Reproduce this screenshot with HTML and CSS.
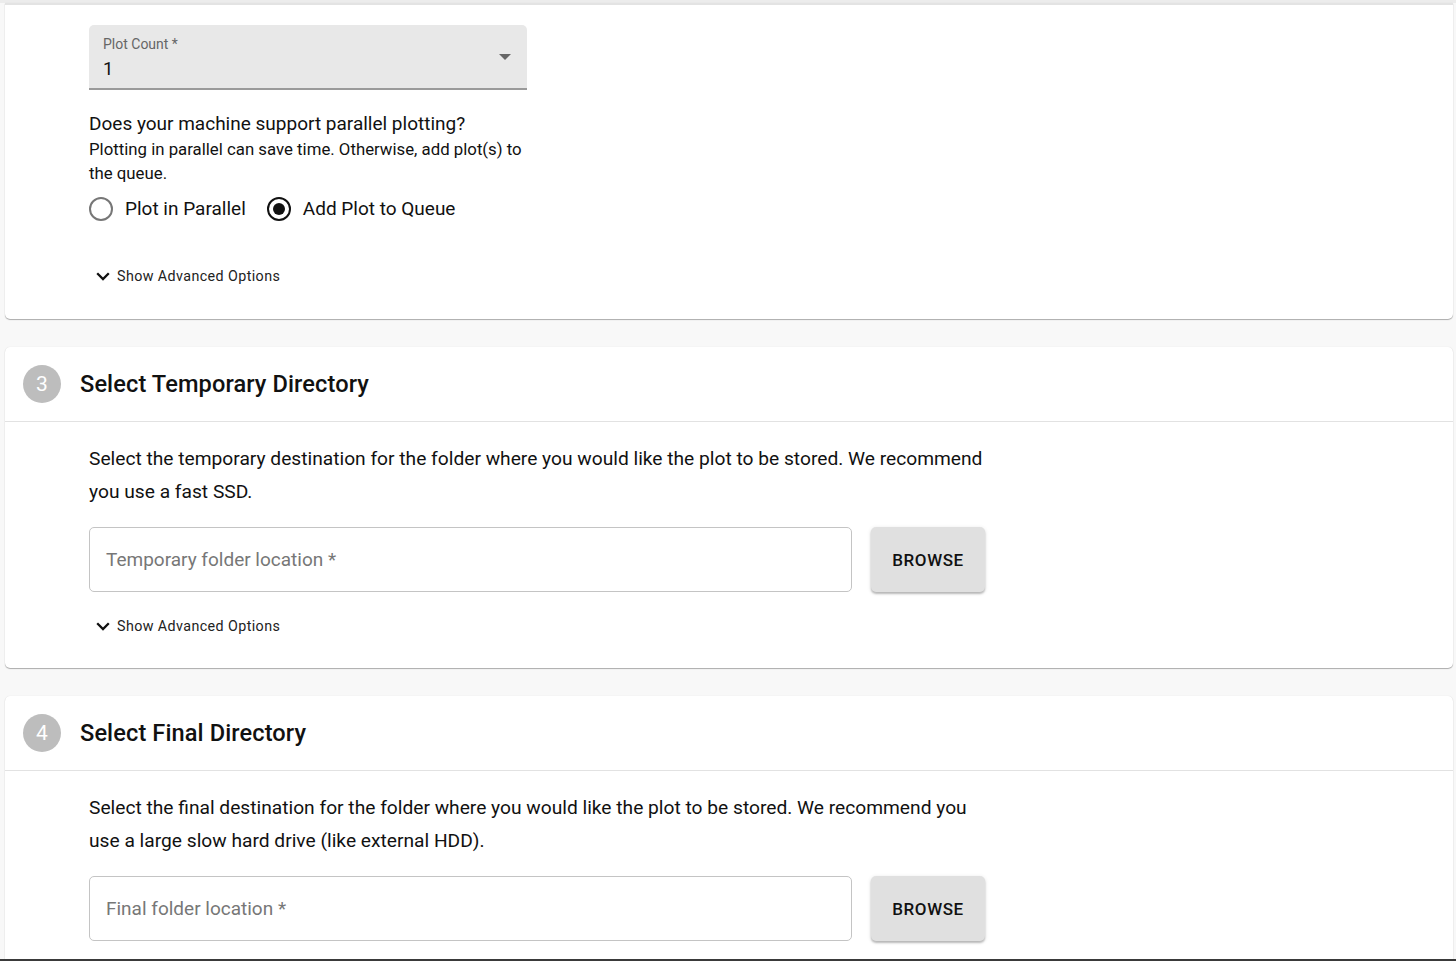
FILE: index.html
```html
<!DOCTYPE html>
<html>
<head>
<meta charset="utf-8">
<link rel="stylesheet" href="styles.css">
</head>
<body>
<div class="page">
  <section class="card card-first">
    <div class="content">
      <div class="select">
        <div class="select-label">Plot Count *</div>
        <div class="select-value">1</div>
        <span class="select-arrow"></span>
      </div>
      <div class="question">Does your machine support parallel plotting?</div>
      <div class="hint">Plotting in parallel can save time. Otherwise, add plot(s) to<br>the queue.</div>
      <div class="radios">
        <label class="radio"><span class="radio-circle"></span>Plot in Parallel</label>
        <label class="radio"><span class="radio-circle checked"></span>Add Plot to Queue</label>
      </div>
      <div class="advanced advanced-first">
        <svg class="chev" viewBox="0 0 16 16" width="16" height="16"><path d="M2.2 5.2 8 11l5.8-5.8" fill="none" stroke="#111" stroke-width="2.3"/></svg>
        <span>Show Advanced Options</span>
      </div>
    </div>
  </section>

  <section class="card">
    <div class="step-header">
      <span class="step-num">3</span>
      <h2 class="step-title">Select Temporary Directory</h2>
    </div>
    <div class="content content-step">
      <p class="desc">Select the temporary destination for the folder where you would like the plot to be stored. We recommend<br>you use a fast SSD.</p>
      <div class="field-row">
        <div class="field">Temporary folder location *</div>
        <button class="browse">BROWSE</button>
      </div>
      <div class="advanced">
        <svg class="chev" viewBox="0 0 16 16" width="16" height="16"><path d="M2.2 5.2 8 11l5.8-5.8" fill="none" stroke="#111" stroke-width="2.3"/></svg>
        <span>Show Advanced Options</span>
      </div>
    </div>
  </section>

  <section class="card card-last">
    <div class="step-header">
      <span class="step-num">4</span>
      <h2 class="step-title">Select Final Directory</h2>
    </div>
    <div class="content content-step">
      <p class="desc">Select the final destination for the folder where you would like the plot to be stored. We recommend you<br>use a large slow hard drive (like external HDD).</p>
      <div class="field-row">
        <div class="field">Final folder location *</div>
        <button class="browse">BROWSE</button>
      </div>
    </div>
  </section>
</div>
</body>
</html>
```

FILE: styles.css
```css
* { box-sizing: border-box; }
html, body {
  margin: 0;
  padding: 0;
  height: 961px;
  overflow: hidden;
  background: #f8f8f8;
  font-family: Roboto, "Liberation Sans", sans-serif;
  color: #111;
}
body::after {
  content: "";
  position: fixed;
  left: 0;
  right: 0;
  bottom: 0;
  height: 2px;
  background: #3a3a3a;
}
.page {
  padding: 0 3px 0 5px;
  border-top: 3px solid #ececec;
  display: flex;
  flex-direction: column;
  gap: 28px;
}
.card {
  background: #fff;
  border-radius: 5px;
  box-shadow: 0 1px 1px rgba(0,0,0,0.3), 0 0 1px rgba(0,0,0,0.12);
}
.card-first {
  border-top-left-radius: 0;
  border-top-right-radius: 0;
  border-top: 2px solid #e3e3e3;
  height: 316px;
}
.card-last { height: 300px; }
.content {
  padding: 20px 0 32px 84px;
}
.content-step { padding-top: 20px; }
.select {
  position: relative;
  width: 438px;
  height: 65px;
  background: #e8e8e8;
  border-radius: 5px 5px 0 0;
  border-bottom: 2px solid #9a9a9a;
  padding: 11px 14px 0;
}
.select-label {
  font-size: 14px;
  color: #666;
  line-height: 16px;
}
.select-value {
  font-size: 18.5px;
  line-height: 24px;
  margin-top: 5px;
  color: #111;
}
.select-arrow {
  position: absolute;
  right: 16px;
  top: 29px;
  width: 0;
  height: 0;
  border-left: 6px solid transparent;
  border-right: 6px solid transparent;
  border-top: 6px solid #666;
}
.question {
  margin-top: 21px;
  font-size: 19px;
  line-height: 26px;
}
.hint {
  font-size: 16.8px;
  line-height: 24px;
  margin-top: 0;
}
.radios {
  display: flex;
  gap: 21px;
  margin-top: 12px;
}
.radio {
  display: flex;
  align-items: center;
  gap: 12px;
  font-size: 19px;
  line-height: 24px;
}
.radio-circle {
  width: 24px;
  height: 24px;
  border-radius: 50%;
  border: 2px solid #777;
  position: relative;
  display: inline-block;
}
.radio-circle.checked { border-color: #111; }
.radio-circle.checked::after {
  content: "";
  position: absolute;
  left: 4px; top: 4px;
  width: 12px; height: 12px;
  border-radius: 50%;
  background: #111;
}
.advanced {
  display: flex;
  align-items: center;
  margin-left: 6px;
  font-size: 14.3px;
  letter-spacing: 0.4px;
  color: #222;
  height: 20px;
}
.advanced .chev { margin-right: 6px; }
.advanced-first { margin-top: 45px; }
.step-header {
  display: flex;
  align-items: center;
  height: 75px;
  padding-left: 18px;
  border-bottom: 1px solid #e2e2e2;
}
.step-num {
  width: 38px;
  height: 38px;
  border-radius: 50%;
  background: #bdbdbd;
  color: #fff;
  font-size: 21px;
  display: flex;
  align-items: center;
  justify-content: center;
}
.step-title {
  margin: 0 0 0 19px;
  font-size: 23.6px;
  font-weight: 500;
  letter-spacing: 0.1px;
}
.desc {
  margin: 0;
  font-size: 19.2px;
  line-height: 33px;
}
.field-row {
  display: flex;
  gap: 19px;
  margin-top: 19px;
}
.field {
  width: 763px;
  height: 65px;
  border: 1px solid #c4c4c4;
  border-radius: 5px;
  padding-left: 16px;
  display: flex;
  align-items: center;
  font-size: 19px;
  color: #777;
}
.browse {
  width: 114px;
  height: 65px;
  border: none;
  border-radius: 5px;
  background: #e0e0e0;
  box-shadow: 0 2px 2px rgba(0,0,0,0.22), 0 1px 4px rgba(0,0,0,0.12);
  font-family: Roboto, "Liberation Sans", sans-serif;
  font-size: 17px;
  font-weight: 500;
  letter-spacing: 0.6px;
  color: #111;
}
.field-row + .advanced { margin-top: 24px; }
```
